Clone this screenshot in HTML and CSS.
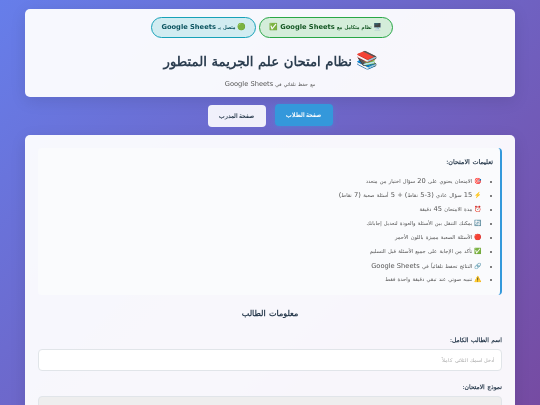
FILE: index.html
```html
<!DOCTYPE html>
<html lang="ar" dir="rtl">
<head>
<meta charset="utf-8">
<title>نظام امتحان علم الجريمة المتطور</title>
<link rel="stylesheet" href="styles.css">
</head>
<body>
<div class="container">
  <header class="card header">
    <div class="badges">
      <span class="badge badge-green"><span class="emo">🖥️</span> نظام متكامل مع <span class="lat">Google Sheets</span> <span class="emo">✅</span></span>
      <span class="badge badge-blue"><span class="emo">🟢</span> متصل بـ <span class="lat">Google Sheets</span></span>
    </div>
    <h1><span class="emo">📚</span> نظام امتحان علم الجريمة المتطور</h1>
    <p class="sub">مع حفظ تلقائي في <span class="lat">Google Sheets</span></p>
  </header>
  <nav class="nav">
    <button class="nav-btn active">صفحة الطلاب</button>
    <button class="nav-btn">صفحة المدرب</button>
  </nav>
  <main class="card main">
    <section class="instructions">
      <h3>تعليمات الامتحان:</h3>
      <ul>
        <li><span class="emo">🎯</span> الامتحان يحتوي على <span class="lat">20</span> سؤال اختيار من متعدد</li>
        <li><span class="emo">⚡</span> <span class="lat">15</span> سؤال عادي <span class="lat">(3-5</span> نقاط<span class="lat">) + 5</span> أسئلة صعبة <span class="lat">(7</span> نقاط<span class="lat">)</span></li>
        <li><span class="emo">⏰</span> مدة الامتحان <span class="lat">45</span> دقيقة</li>
        <li><span class="emo">🔄</span> يمكنك التنقل بين الأسئلة والعودة لتعديل إجاباتك</li>
        <li><span class="emo">🔴</span> الأسئلة الصعبة مميزة باللون الأحمر</li>
        <li><span class="emo">✅</span> تأكد من الإجابة على جميع الأسئلة قبل التسليم</li>
        <li><span class="emo">🔗</span> النتائج تحفظ تلقائياً في <span class="lat">Google Sheets</span></li>
        <li><span class="emo">⚠️</span> تنبيه صوتي عند تبقي دقيقة واحدة فقط</li>
      </ul>
    </section>
    <h2>معلومات الطالب</h2>
    <div class="field">
      <label for="name">اسم الطالب الكامل:</label>
      <input id="name" type="text" placeholder="أدخل اسمك الثلاثي كاملاً">
    </div>
    <div class="field">
      <label for="model">نموذج الامتحان:</label>
      <div id="model" class="select"></div>
    </div>
  </main>
</div>
</body>
</html>
```
FILE: styles.css
```css
* { box-sizing: border-box; margin: 0; padding: 0; }
html, body { height: 405px; overflow: hidden; }
body {
  background: linear-gradient(135deg, #667eea 0%, #764ba2 100%);
  font-family: "Liberation Sans", sans-serif;
  color: #2c3e50;
  word-spacing: 0.8px;
  text-rendering: geometricPrecision;
}
.lat { font-family: "DejaVu Sans", sans-serif; font-size: 6.7px; word-spacing: 0; }
.container { padding: 9px 25px 0; will-change: transform; }
.card {
  background: rgba(255, 255, 255, 0.95);
  border-radius: 5px;
  box-shadow: 0 4px 16px rgba(0, 0, 0, 0.1);
}
.header { height: 88px; padding-top: 8px; text-align: center; }
.badges { display: flex; justify-content: center; gap: 3px; height: 21px; padding-left: 4px; }
.badge {
  display: block;
  height: 21px;
  padding: 0 9px;
  border-radius: 11px;
  font-size: 5px;
  line-height: 19px;
  font-weight: bold;
  white-space: nowrap;
}
.badge .emo { font-size: 7px; }
.badge-green { background: #d4edda; border: 1px solid #28a745; color: #155724; }
.badge-blue { background: #d1ecf1; border: 1px solid #17a2b8; color: #0c5460; }
h1 { margin-top: 10px; padding-left: 2px; font-size: 13.2px; line-height: 24px; font-weight: bold; word-spacing: 1px; }
h1 .emo { font-size: 17.5px; }
.sub { margin-top: 6px; font-size: 4.8px; line-height: 9px; color: #555; }
.nav { display: flex; justify-content: center; gap: 9px; margin-top: 8px; height: 22px; }
.nav-btn {
  width: 58px;
  height: 22px;
  border: 0;
  border-radius: 4px;
  font-family: inherit;
  font-size: 5.8px;
  font-weight: bold;
  color: #2c3e50;
  background: rgba(255, 255, 255, 0.9);
}
.nav-btn.active { background: #3498db; color: #fff; margin-top: -1px; box-shadow: 0 1px 5px rgba(52, 152, 219, 0.4); }
.main { margin-top: 8px; padding: 13px 13px 0; height: 300px; }
.instructions {
  height: 147px;
  padding: 10px 7px 0 10px;
  background: #fafbfd;
  border-right: 2px solid #3498db;
  border-radius: 4px;
}
.instructions h3 { font-size: 6.4px; line-height: 10px; font-weight: bold; }
.instructions ul { margin-top: 6px; padding-right: 11px; }
.instructions li { height: 14.2px; font-size: 5.2px; line-height: 14.2px; color: #555; }
.instructions li::marker { font-size: 7px; }
.instructions .emo { font-size: 6px; }
h2 { margin-top: 12px; font-size: 8px; line-height: 13px; text-align: center; font-weight: bold; word-spacing: 1px; }
.field { margin-top: 13px; }
h2 + .field { margin-top: 17px; }
label { display: block; font-size: 6px; line-height: 9px; font-weight: bold; margin-bottom: 3px; }
input, .select {
  display: block;
  width: 100%;
  height: 22px;
  padding: 0 7px;
  border: 1px solid #e1e5e9;
  border-radius: 4px;
  background: #fff;
  font-family: inherit;
  font-size: 5.2px;
  word-spacing: 0.8px;
}
input::placeholder { color: #aaa; }
.select { background: #eee; }
```
